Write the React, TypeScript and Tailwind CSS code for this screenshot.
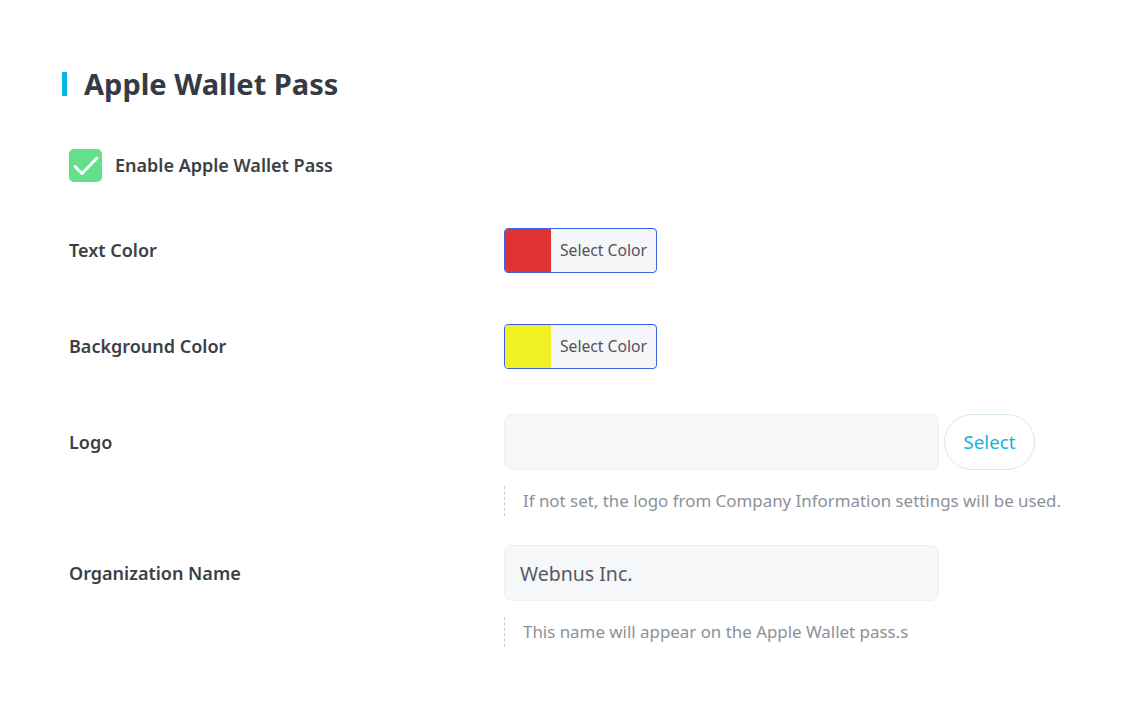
import { useState } from "react";

const font = { fontFamily: '"Noto Sans", "Open Sans", sans-serif' };

function ColorPicker({ color }: { color: string }) {
  return (
    <button className="flex h-[45px] w-[153px] overflow-hidden rounded-[4px] border border-[#3e5ee8] bg-[#f5f6f8]">
      <span className={`h-full w-[46px] shrink-0 ${color}`} />
      <span className="flex h-full flex-1 items-center justify-center text-[15.7px] text-[#50545c]">Select Color</span>
    </button>
  );
}

function Hint({ children }: { children: React.ReactNode }) {
  return (
    <div className="mt-4 flex h-[30px] items-center border-l border-dashed border-[#c9ccd1] pl-[18px] text-[16.9px] text-[#8d9197]">
      {children}
    </div>
  );
}

export default function App() {
  const [enabled, setEnabled] = useState(true);

  return (
    <div className="min-h-screen bg-white pl-[62px] pt-[66px]" style={font}>
      <div className="flex items-center gap-[17px]">
        <span className="h-[24px] w-[5px] bg-[#04b4e8]" />
        <h2 className="text-[29px] font-bold leading-[36px] text-[#363a44]">Apple Wallet Pass</h2>
      </div>

      <label className="mt-[47px] ml-[7px] flex cursor-pointer items-center gap-[13px]">
        <button
          onClick={() => setEnabled(!enabled)}
          className={`flex h-[33px] w-[33px] items-center justify-center rounded-[5px] ${enabled ? "bg-[#63e089]" : "border border-gray-300 bg-white"}`}
        >
          {enabled && (
            <svg width="28" height="22" viewBox="0 0 28 22" fill="none">
              <path d="M3 11.5 L10 18.5 L25 3" stroke="white" strokeWidth="3" strokeLinecap="round" strokeLinejoin="round" />
            </svg>
          )}
        </button>
        <span className="text-[18px] font-semibold text-[#3b3f48]">Enable Apple Wallet Pass</span>
      </label>

      <div className="ml-[7px] mt-[46px] flex flex-col">
        <div className="grid grid-cols-[435px_1fr] items-center">
          <span className="text-[18px] font-semibold text-[#3b3f48]">Text Color</span>
          <ColorPicker color="bg-[#e03232]" />
        </div>

        <div className="mt-[51px] grid grid-cols-[435px_1fr] items-center">
          <span className="text-[18px] font-semibold text-[#3b3f48]">Background Color</span>
          <ColorPicker color="bg-[#f0f022]" />
        </div>

        <div className="mt-[45px] grid grid-cols-[435px_1fr] items-start">
          <span className="flex h-[56px] items-center text-[18px] font-semibold text-[#3b3f48]">Logo</span>
          <div>
            <div className="flex items-center gap-[5px]">
              <input className="h-[56px] w-[435px] rounded-[8px] border border-[#eef0f3] bg-[#f6f7f9] px-4 text-[18px] outline-none" />
              <button className="h-[56px] w-[91px] rounded-full border border-[#d5e8ef] bg-white text-[18.7px] text-[#16b0e2]">Select</button>
            </div>
            <Hint>If not set, the logo from Company Information settings will be used.</Hint>
          </div>
        </div>

        <div className="mt-[29px] grid grid-cols-[435px_1fr] items-start">
          <span className="flex h-[56px] items-center text-[18px] font-semibold text-[#3b3f48]">Organization Name</span>
          <div>
            <input
              defaultValue="Webnus Inc."
              className="h-[56px] w-[435px] rounded-[8px] border border-[#eef0f3] bg-[#f6f7f9] px-[15px] text-[19.5px] text-[#555a62] outline-none"
            />
            <Hint>This name will appear on the Apple Wallet pass.s</Hint>
          </div>
        </div>
      </div>
    </div>
  );
}
